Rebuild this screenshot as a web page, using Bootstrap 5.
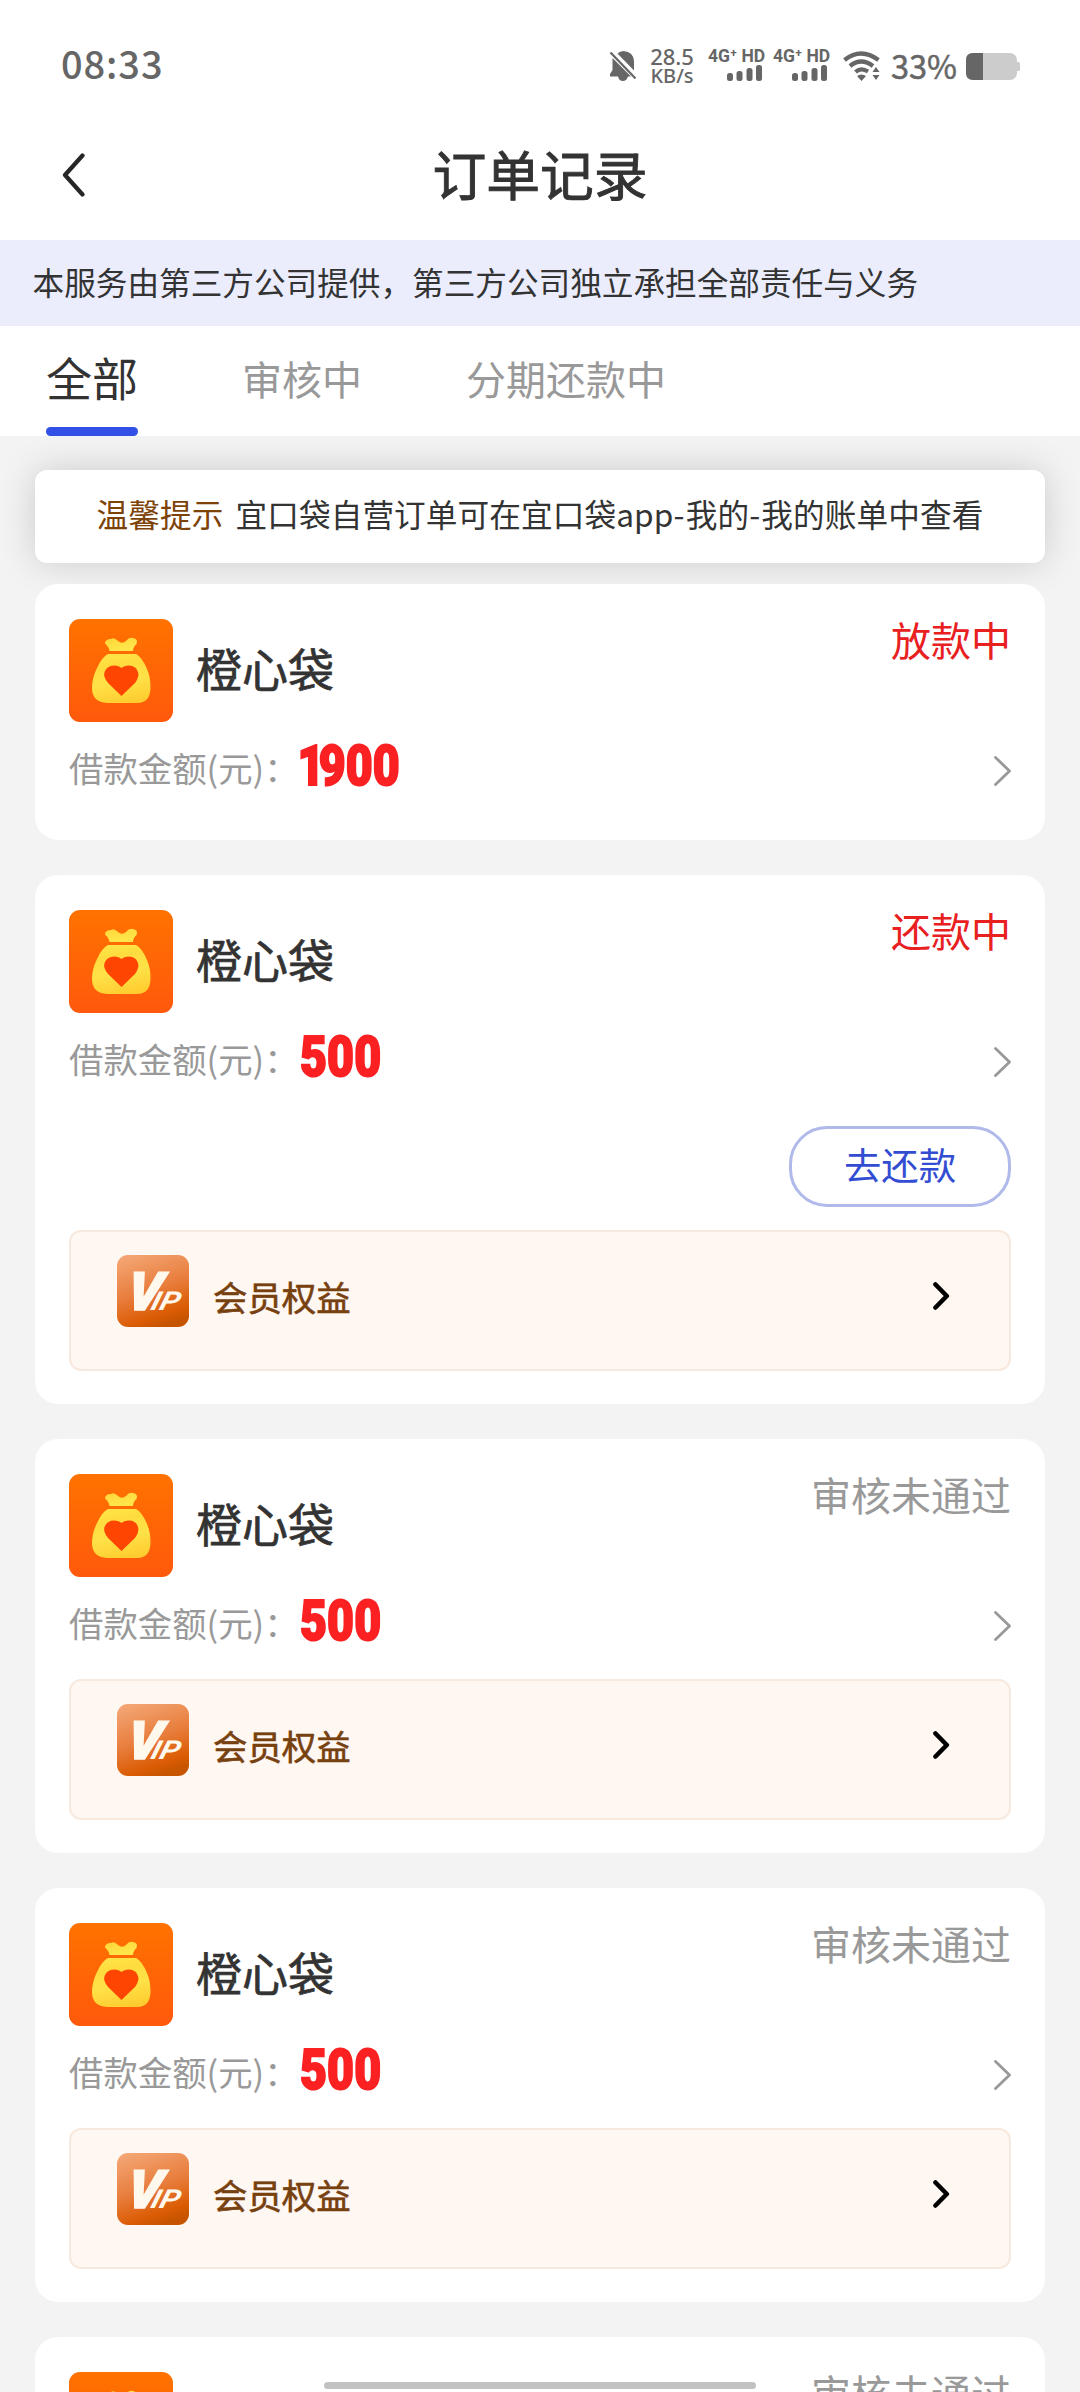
<!DOCTYPE html>
<html lang="zh-CN">
<head>
<meta charset="utf-8">
<meta name="viewport" content="width=device-width, initial-scale=1">
<title>订单记录</title>
<link href="https://cdn.jsdelivr.net/npm/bootstrap@5.3.0/dist/css/bootstrap.min.css" rel="stylesheet">
<style>
  body { font-family: "Noto Sans CJK SC", sans-serif; background: #f3f3f3; color: #333; width: 1080px; height: 2392px; overflow: hidden; line-height: 1; }
  svg { display: block; flex: none; }
  .status-bar { height: 110px; padding: 24px 60px 0 61px; color: #666; }
  .clock { font-size: 38px; font-weight: 500; letter-spacing: .9px; line-height: 78px; }
  .sys-icons { height: 80px; }
  .bell { margin-top: 25px; }
  .net-speed { font-family: "Noto Sans", sans-serif; font-size: 22px; line-height: 20px; width: 48px; margin-left: 11px; margin-right: 1px; font-weight: 500; text-align: center; padding-top: 22px; white-space: nowrap; }
  .net-speed .unit { font-size: 20px; line-height: 20px; }
  .signal { width: 57px; padding-top: 23px; }
  .signal .net-type { font: 700 17.5px/18px Roboto, sans-serif; white-space: nowrap; margin-left: -1px; }
  .signal svg { margin-left: 18px; }
  .wifi { margin-top: 26px; }
  .battery-pct { font-size: 32.5px; line-height: 82px; margin-left: 10px; margin-right: 1px; width: 66px; -webkit-text-stroke: .5px #666; }
  .battery { margin-top: 29px; }
  .title-bar { height: 130px; padding: 0 60px; }
  .title-bar h1 { font-size: 53.8px; font-weight: 400; line-height: 130px; color: #333; -webkit-text-stroke: .9px #333; padding-bottom: 4px; }
  .back-link { width: 60px; }
  .notice-strip { height: 86px; background: #ebedfd; font-size: 31.64px; line-height: 82px; padding-left: 32.5px; white-space: nowrap; }
  .order-tabs { height: 110px; padding-left: 46px; }
  .order-tabs .nav-link { padding: 0; color: #999; font-size: 40px; line-height: 105px; height: 110px; }
  .order-tabs .nav-link.active { color: #333; font-size: 46px; line-height: 100px; width: 92px; }
  .order-tabs .nav-link.active::after { content: ""; display: block; height: 9px; border-radius: 5px; background: #3350e6; margin-top: 1px; }
  .tab-gap { margin-left: 104px; }
  .order-list { padding: 34px 35px 0; }
  .tip-box { height: 93px; border-radius: 12px; box-shadow: 0 0 36px rgba(0,0,0,.16); font-size: 31.64px; letter-spacing: .1px; line-height: 87px; white-space: nowrap; margin-bottom: 21px; }
  .tip-box .tip-head { color: #7c4208; margin-right: 12px; }
  .tip-box .hyphen { letter-spacing: 1.2px; }
  .order-card { border: 0; border-radius: 23px; margin-bottom: 35px; padding: 35px 34px 33.5px; }
  .shop-name { font-size: 46px; margin-left: 23px; line-height: 96px; height: 103px; -webkit-text-stroke: .7px #333; }
  .state { font-size: 40px; line-height: 43px; color: #999; margin-top: -1px; }
  .state.hot { color: #e8201f; }
  .amount-row { height: 102px; margin-right: -1px; }
  .amount-row.compact { height: 84px; }
  .amount-label { font-size: 34.4px; color: #999; line-height: 90px; white-space: nowrap; width: 231px; }
  .amount { font: 900 56px/80px Roboto, sans-serif; color: #fb2022; transform: scaleX(.83); transform-origin: 0 50%; margin-top: 4px; letter-spacing: .2px; -webkit-text-stroke: 2px #fb2022; }
  .amount .lead-one { letter-spacing: -7px; margin-left: -3px; }
  .go-detail { margin-top: 34px; }
  .pay-row { height: 115.5px; padding-top: 11px; }
  .pay-btn { width: 222px; height: 81px; border: 3px solid #afb9ea; border-radius: 38px; color: #334dd2; font-size: 37.4px; line-height: 67px; padding: 0 0 4px; }
  .vip-box { height: 140.5px; border: 2px solid #f8e9df; border-radius: 12px; background: #fff7f1; padding: 23px 59px 0 46px; }
  .vip-label { font-size: 34.4px; color: #77400f; line-height: 83px; margin-left: 24px; -webkit-text-stroke: .6px #77400f; }
  .go-vip { margin-top: 27px; }
  .home-bar { position: absolute; left: 324px; top: 2382px; width: 432px; height: 7px; border-radius: 4px; background: #c2c2c2; }
</style>
</head>
<body class="position-relative">
<svg width="0" height="0" class="position-absolute">
  <defs>
    <linearGradient id="gOrange" x1="0" y1="0" x2="0" y2="1"><stop offset="0" stop-color="#ff7200"/><stop offset="1" stop-color="#ff590c"/></linearGradient>
    <linearGradient id="gBag" gradientUnits="userSpaceOnUse" x1="45" y1="18" x2="58" y2="85"><stop offset="0" stop-color="#ffd73a"/><stop offset=".2" stop-color="#ffe64a"/><stop offset=".4" stop-color="#ffdc3e"/><stop offset=".65" stop-color="#ffe248"/><stop offset="1" stop-color="#ffcb2e"/></linearGradient>
    <linearGradient id="gVip" x1=".25" y1="0" x2=".6" y2="1"><stop offset="0" stop-color="#f3a472"/><stop offset=".5" stop-color="#e87d3c"/><stop offset=".85" stop-color="#db5c04"/><stop offset="1" stop-color="#c65400"/></linearGradient>
    <symbol id="bag" viewBox="0 0 104 103">
      <rect width="104" height="103" rx="11" fill="url(#gOrange)"/>
      <path fill="url(#gBag)" d="M40.500 32 Q39.500 27 36 24.500 Q36 20 42 20 Q45 18 49 22 Q53 25.500 57 22 Q60 18 64 19 Q69.500 20 67.500 25 Q64 28 64 32Z"/>
      <path fill="url(#gBag)" d="M39 35H67Q73 38 78 50Q81.500 58 81.500 68Q81.500 84 68 84H38Q23 83 23 69Q23 59 28 49Q33 38 39 35Z"/>
      <path fill="#ff4502" d="M52.500 77 L39 64 Q34 58 35.500 53 Q38 46.500 45 46.500 Q50 46.500 52.500 49 Q55 46.500 60 46.500 Q67 46.500 69 53 Q70.500 58 66 64Z"/>
    </symbol>
    <symbol id="vip" viewBox="0 0 72 72">
      <rect width="72" height="72" rx="11" fill="url(#gVip)"/>
      <text transform="translate(8 55) skewX(-9)" font-family="Roboto, sans-serif" font-weight="900" font-style="italic" font-size="53" fill="#fff8ed" stroke="#fff8ed" stroke-width="1.500">V</text>
      <text transform="translate(32.500 55) skewX(-16) scale(1.2 1)" font-family="Roboto, sans-serif" font-weight="700" font-style="italic" font-size="26" fill="#fff8ed">IP</text>
    </symbol>
    <symbol id="next" viewBox="0 0 18 30"><path d="M1.500 1.500 L15.500 15 L1.500 28.500" fill="none" stroke="#999" stroke-width="2.800" stroke-linecap="round" stroke-linejoin="round"/></symbol>
    <symbol id="nextBold" viewBox="0 0 17 28"><path d="M2.500 2.500 L13.800 14 L2.500 25.500" fill="none" stroke="#000" stroke-width="4.600" stroke-linecap="round" stroke-linejoin="round"/></symbol>
    <symbol id="bars" viewBox="0 0 36 16"><g fill="#666"><rect y="8" width="6" height="8" rx="2.500"/><rect x="9.500" y="6" width="6" height="10" rx="2.500"/><rect x="19.500" y="3" width="6" height="13" rx="2.500"/><rect x="29" width="6" height="16" rx="2.500"/></g></symbol>
  </defs>
</svg>

<header class="bg-white">
  <div class="status-bar d-flex justify-content-between">
    <div class="clock">08:33</div>
    <div class="sys-icons d-flex">
      <svg class="bell" width="28" height="32" viewBox="0 0 28 32"><path fill="#666" d="M8.500 4.500 Q11 2 14.500 2 Q24.500 3 25 12 V21.500Z M3.500 9 L22 27.500 H19 Q17.500 32 14 32 Q10 32 9 27.500 H1 V25 L3.500 21Z"/><path d="M1.500 3.500 L26.500 29.500" stroke="#666" stroke-width="2.200"/></svg>
      <div class="net-speed"><div>28.5</div><div class="unit">KB/s</div></div>
      <div class="signal ms-2 ps-1"><div class="net-type">4G⁺ HD</div><svg width="36" height="16"><use href="#bars"/></svg></div>
      <div class="signal ms-2 ps-1"><div class="net-type">4G⁺ HD</div><svg width="36" height="16"><use href="#bars"/></svg></div>
      <svg class="wifi ms-3" width="38" height="31" viewBox="0 0 38 31"><g fill="none" stroke="#666" stroke-width="4.200"><path d="M1.500 10 Q18 -3 35.500 10"/><path d="M7 16 Q18 7 30 16"/><path d="M12.500 22 Q18 17 25 21.500"/></g><path fill="#666" d="M14 26 Q18.500 23 23 26 L18.500 31Z M29.500 22 L33 17 L36.500 22Z M29.500 25 H36.500 L33 30Z"/></svg>
      <div class="battery-pct">33%</div>
      <svg class="battery ms-2" width="54" height="27" viewBox="0 0 54 27"><rect width="51" height="27" rx="7" fill="#ccc"/><path d="M51 9 h1.500 a1.500 1.500 0 0 1 1.500 1.500 v6 a1.500 1.500 0 0 1 -1.500 1.500 H51Z" fill="#ccc"/><path d="M17 0H7Q0 0 0 7V20Q0 27 7 27H17Z" fill="#666"/></svg>
    </div>
  </div>
  <div class="title-bar d-flex align-items-center justify-content-between">
    <a class="back-link" href="#" aria-label="返回"><svg width="27" height="44" viewBox="0 0 27 44"><path d="M22.500 2.500 L5 22 L22.500 41.500" fill="none" stroke="#262626" stroke-width="4.200" stroke-linecap="round" stroke-linejoin="round"/></svg></a>
    <h1 class="m-0">订单记录</h1>
    <span class="back-link"></span>
  </div>
</header>

<div class="notice-strip">本服务由第三方公司提供，第三方公司独立承担全部责任与义务</div>

<nav class="order-tabs nav flex-nowrap bg-white">
  <a class="nav-link active" href="#">全部</a>
  <a class="nav-link tab-gap" href="#">审核中</a>
  <a class="nav-link tab-gap" href="#">分期还款中</a>
</nav>

<main class="order-list">
  <div class="tip-box bg-white text-center"><span class="tip-head">温馨提示</span>宜口袋自营订单可在宜口袋app<span class="hyphen">-</span>我的<span class="hyphen">-</span>我的账单中查看</div>

  <section class="order-card card">
    <div class="d-flex align-items-start"><svg width="104" height="103"><use href="#bag"/></svg><div class="shop-name">橙心袋</div><div class="state hot ms-auto">放款中</div></div>
    <div class="amount-row compact d-flex align-items-start"><div class="amount-label">借款金额(元)：</div><div class="amount"><span class="lead-one">1</span>900</div><svg class="go-detail ms-auto" width="18" height="30"><use href="#next"/></svg></div>
  </section>

  <section class="order-card card">
    <div class="d-flex align-items-start"><svg width="104" height="103"><use href="#bag"/></svg><div class="shop-name">橙心袋</div><div class="state hot ms-auto">还款中</div></div>
    <div class="amount-row d-flex align-items-start"><div class="amount-label">借款金额(元)：</div><div class="amount">500</div><svg class="go-detail ms-auto" width="18" height="30"><use href="#next"/></svg></div>
    <div class="pay-row d-flex justify-content-end"><button class="pay-btn btn">去还款</button></div>
    <div class="vip-box d-flex align-items-start"><svg width="72" height="72"><use href="#vip"/></svg><div class="vip-label">会员权益</div><svg class="go-vip ms-auto" width="17" height="28"><use href="#nextBold"/></svg></div>
  </section>

  <section class="order-card card">
    <div class="d-flex align-items-start"><svg width="104" height="103"><use href="#bag"/></svg><div class="shop-name">橙心袋</div><div class="state ms-auto">审核未通过</div></div>
    <div class="amount-row d-flex align-items-start"><div class="amount-label">借款金额(元)：</div><div class="amount">500</div><svg class="go-detail ms-auto" width="18" height="30"><use href="#next"/></svg></div>
    <div class="vip-box d-flex align-items-start"><svg width="72" height="72"><use href="#vip"/></svg><div class="vip-label">会员权益</div><svg class="go-vip ms-auto" width="17" height="28"><use href="#nextBold"/></svg></div>
  </section>

  <section class="order-card card">
    <div class="d-flex align-items-start"><svg width="104" height="103"><use href="#bag"/></svg><div class="shop-name">橙心袋</div><div class="state ms-auto">审核未通过</div></div>
    <div class="amount-row d-flex align-items-start"><div class="amount-label">借款金额(元)：</div><div class="amount">500</div><svg class="go-detail ms-auto" width="18" height="30"><use href="#next"/></svg></div>
    <div class="vip-box d-flex align-items-start"><svg width="72" height="72"><use href="#vip"/></svg><div class="vip-label">会员权益</div><svg class="go-vip ms-auto" width="17" height="28"><use href="#nextBold"/></svg></div>
  </section>

  <section class="order-card card">
    <div class="d-flex align-items-start"><svg width="104" height="103"><use href="#bag"/></svg><div class="state ms-auto">审核未通过</div></div>
  </section>
</main>
<div class="home-bar"></div>
<script src="https://cdn.jsdelivr.net/npm/bootstrap@5.3.0/dist/js/bootstrap.bundle.min.js"></script>
</body>
</html>
